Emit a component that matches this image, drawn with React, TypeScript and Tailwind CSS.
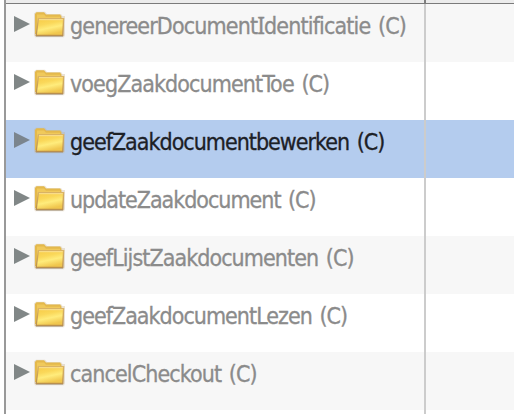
const rows = [
  { label: 'genereerDocumentIdentificatie (C)', tracking: 'tracking-[-0.86px]' },
  { label: 'voegZaakdocumentToe (C)', tracking: 'tracking-[-0.9px]' },
  { label: 'geefZaakdocumentbewerken (C)', tracking: 'tracking-[-0.99px]', selected: true },
  { label: 'updateZaakdocument (C)', tracking: 'tracking-[-1.02px]' },
  { label: 'geefLijstZaakdocumenten (C)', tracking: 'tracking-[-0.93px]' },
  { label: 'geefZaakdocumentLezen (C)', tracking: 'tracking-[-0.98px]' },
  { label: 'cancelCheckout (C)', tracking: 'tracking-[-0.9px]' },
];

function Folder() {
  return (
    <svg className="h-[28px] w-[32px] shrink-0" viewBox="0 0 32 28">
      <defs>
        <linearGradient id="front" x1="0" y1="0" x2="0.35" y2="1">
          <stop offset="0" stopColor="#f7ca45" />
          <stop offset="0.4" stopColor="#fad85a" />
          <stop offset="0.65" stopColor="#ffec7c" />
          <stop offset="1" stopColor="#f0c64d" />
        </linearGradient>
        <linearGradient id="edge" x1="0" y1="0" x2="0" y2="1">
          <stop offset="0" stopColor="#d9b365" />
          <stop offset="1" stopColor="#b98f4e" />
        </linearGradient>
      </defs>
      <path d="M0 2.5L2 .8H11L13 3H27L28.5 5H31V24L30 26.3H1L0 24Z" fill="#c5b08a" opacity=".35" />
      <path d="M1 3L2.5 1.3H10L12 3.6H26L27.5 5.5V23H1Z" fill="#e4b94c" />
      <path d="M3 3.5H10L12 5.8H26V12H3Z" fill="#f0c95b" />
      <path d="M4.4 7.6H29.6L28.8 24.4H2.2Z" fill="url(#front)" stroke="url(#edge)" strokeWidth="1.3" />
      <path d="M5 8.7H28.8" stroke="#fae095" strokeWidth="1" />
      <path d="M2 25.5H29" stroke="#9b8b72" strokeWidth="1" opacity=".5" />
    </svg>
  );
}

export default function App() {
  return (
    <div className="grid h-[414px] w-[514px] grid-cols-[4px_2px_1fr] overflow-hidden bg-white font-['DejaVu_Sans_Condensed','Noto_Sans',sans-serif]">
      <div />
      <div className="bg-[#999999]" />
      <div className="min-w-0">
        <div className="flex h-[4px] border-b border-[#7b7b7b] bg-[#ececec]">
          <div className="ml-[418px] w-[2px] bg-[#7f7f7f]" />
        </div>
        {rows.map((row) => (
          <div
            key={row.label}
            className={`flex h-[58px] ${row.selected ? 'bg-[#b4ccee] text-[#1c2026]' : 'text-[#8b8b8b] odd:bg-white even:bg-[#f7f7f7]'}`}
          >
            <div className="flex w-[418px] shrink-0 items-start pl-2">
              <svg className="mt-3 h-4 w-4 shrink-0" viewBox="0 0 16 16">
                <path d="M0 0L16 8L0 16Z" fill={row.selected ? '#7b858e' : '#818787'} />
              </svg>
              <div className="mt-[7px] ml-1">
                <Folder />
              </div>
              <span className={`ml-1 text-[23px] leading-[44px] whitespace-nowrap [word-spacing:2px] [-webkit-text-stroke:0.3px] ${row.tracking}`}>
                {row.label.split(/(I)/).map((part, i) =>
                  part === 'I' ? <span key={i} className="font-['Noto_Sans'] leading-none">I</span> : part
                )}
              </span>
            </div>
            <div className="w-[2px] bg-[#cccccc]" />
          </div>
        ))}
        <div className="flex h-[4px]">
          <div className="ml-[418px] w-[2px] bg-[#cccccc]" />
        </div>
      </div>
    </div>
  );
}
